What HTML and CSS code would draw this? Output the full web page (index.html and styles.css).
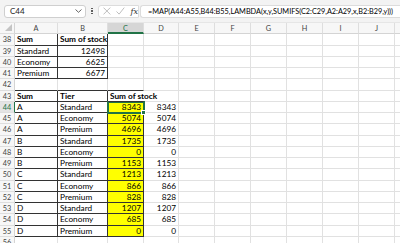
FILE: index.html
```html
<!doctype html>
<html>
    <head>
        <meta charset="UTF-8">
        <title>Book1 - Excel</title>
        <link rel="stylesheet" href="styles.css">
    </head>
    <body>
        <!--Formula bar-->
        <div class="bar">
            <div class="namebox">
                <span>C44</span>
                <svg class="caret" width="7" height="4" viewBox="0 0 7 4"><path d="M0.5 0.5 L3.5 3.3 L6.5 0.5" fill="none" stroke="#555" stroke-width="0.9"/></svg>
            </div>
            <div class="dots"><i></i><i></i><i></i></div>
            <div class="fxbox">
                <svg width="8" height="8" viewBox="0 0 8 8"><path d="M0.5 0.5 L7.5 7.5 M7.5 0.5 L0.5 7.5" stroke="#b4b4b4" stroke-width="0.9"/></svg>
                <svg width="9" height="8" viewBox="0 0 9 8"><path d="M0.5 4.5 L3.2 7.2 L8.5 0.5" fill="none" stroke="#b4b4b4" stroke-width="0.9"/></svg>
                <span class="fx">fx</span>
            </div>
            <div class="formula">=MAP(A44:A55,B44:B55,LAMBDA(x,y,SUMIFS(C2:C29,A2:A29,x,B2:B29,y)))</div>
        </div>

        <!--Sheet-->
        <div class="sheet">
            <div class="row head">
                <div class="rh corner"><svg width="7" height="7" viewBox="0 0 7 7"><path d="M7 0 L7 7 L0 7 Z" fill="#c4c4c4"/></svg></div>
                <div class="h a">A</div>
                <div class="h b">B</div>
                <div class="h cc on">C</div>
                <div class="h d">D</div>
                <div class="h e">E</div>
                <div class="h e">F</div>
                <div class="h e">G</div>
                <div class="h e">H</div>
                <div class="h e">I</div>
                <div class="h e">J</div>
                <div class="h e"></div>
            </div>

            <div class="row"><div class="rh">38</div><div class="c a k bold">Sum</div><div class="c b k bold">Sum of stock</div><div class="c cc"></div><div class="c d"></div><div class="rest"></div></div>
            <div class="row"><div class="rh">39</div><div class="c a k">Standard</div><div class="c b k num">12498</div><div class="c cc"></div><div class="c d"></div><div class="rest"></div></div>
            <div class="row"><div class="rh">40</div><div class="c a k">Economy</div><div class="c b k num">6625</div><div class="c cc"></div><div class="c d"></div><div class="rest"></div></div>
            <div class="row"><div class="rh">41</div><div class="c a k">Premium</div><div class="c b k num">6677</div><div class="c cc"></div><div class="c d"></div><div class="rest"></div></div>
            <div class="row"><div class="rh">42</div><div class="c a kb"></div><div class="c b kb"></div><div class="c cc kb"></div><div class="c d"></div><div class="rest"></div></div>
            <div class="row"><div class="rh">43</div><div class="c a k bold">Sum</div><div class="c b k bold">Tier</div><div class="c cc kb open bold">Sum of stock</div><div class="c d"></div><div class="rest"></div></div>

            <div class="row"><div class="rh act">44</div><div class="c a k">A</div><div class="c b k">Standard</div><div class="c cc k y num sel">8343</div><div class="c d num">8343</div><div class="rest"></div></div>
            <div class="row"><div class="rh">45</div><div class="c a k">A</div><div class="c b k">Economy</div><div class="c cc k y num">5074</div><div class="c d num">5074</div><div class="rest"></div></div>
            <div class="row"><div class="rh">46</div><div class="c a k">A</div><div class="c b k">Premium</div><div class="c cc k y num">4696</div><div class="c d num">4696</div><div class="rest"></div></div>
            <div class="row"><div class="rh">47</div><div class="c a k">B</div><div class="c b k">Standard</div><div class="c cc k y num">1735</div><div class="c d num">1735</div><div class="rest"></div></div>
            <div class="row"><div class="rh">48</div><div class="c a k">B</div><div class="c b k">Economy</div><div class="c cc k y num">0</div><div class="c d num">0</div><div class="rest"></div></div>
            <div class="row"><div class="rh">49</div><div class="c a k">B</div><div class="c b k">Premium</div><div class="c cc k y num">1153</div><div class="c d num">1153</div><div class="rest"></div></div>
            <div class="row"><div class="rh">50</div><div class="c a k">C</div><div class="c b k">Standard</div><div class="c cc k y num">1213</div><div class="c d num">1213</div><div class="rest"></div></div>
            <div class="row"><div class="rh">51</div><div class="c a k">C</div><div class="c b k">Economy</div><div class="c cc k y num">866</div><div class="c d num">866</div><div class="rest"></div></div>
            <div class="row"><div class="rh">52</div><div class="c a k">C</div><div class="c b k">Premium</div><div class="c cc k y num">828</div><div class="c d num">828</div><div class="rest"></div></div>
            <div class="row"><div class="rh">53</div><div class="c a k">D</div><div class="c b k">Standard</div><div class="c cc k y num">1207</div><div class="c d num">1207</div><div class="rest"></div></div>
            <div class="row"><div class="rh">54</div><div class="c a k">D</div><div class="c b k">Economy</div><div class="c cc k y num">685</div><div class="c d num">685</div><div class="rest"></div></div>
            <div class="row"><div class="rh">55</div><div class="c a k">D</div><div class="c b k">Premium</div><div class="c cc k y num">0</div><div class="c d num">0</div><div class="rest"></div></div>
            <div class="row"><div class="rh">56</div><div class="c a"></div><div class="c b"></div><div class="c cc"></div><div class="c d"></div><div class="rest"></div></div>
        </div>
    </body>
</html>
```

FILE: styles.css
```css
body{
    margin: 0;
    width: 400px;
    height: 243px;
    overflow: hidden;
    background: white;
    font-family: Lato, "Liberation Sans", sans-serif;
    color: black;
}

/* Formula bar */
.bar{
    box-sizing: border-box;
    height: 23px;
    display: flex;
    align-items: center;
    padding-left: 4px;
    background: #f3f3f3;
    border-bottom: 1px solid #e6e6e6;
    white-space: nowrap;
}

.namebox{
    box-sizing: border-box;
    width: 82px;
    height: 13px;
    display: flex;
    align-items: center;
    justify-content: space-between;
    padding: 0 3px 0 5px;
    background: white;
    border: 1px solid #cfcfcf;
    border-radius: 3px;
    font-size: 8px;
    color: #222;
}

.dots{
    width: 12px;
    display: flex;
    flex-direction: column;
    align-items: center;
    gap: 1px;
}
.dots i{
    width: 1.5px;
    height: 1.5px;
    border-radius: 50%;
    background: #444;
}

.fxbox{
    box-sizing: border-box;
    width: 41px;
    height: 13px;
    display: flex;
    align-items: center;
    gap: 5px;
    padding-left: 4px;
    background: white;
    border: 1px solid #dcdcdc;
    border-radius: 3px 0 0 3px;
}
.fx{
    font-family: "DejaVu Serif", serif;
    font-style: italic;
    font-size: 8px;
    color: #333;
    margin-left: 1px;
}

.formula{
    box-sizing: border-box;
    flex: 1;
    height: 13px;
    margin-left: 1px;
    padding-left: 7px;
    background: white;
    border: 1px solid #dcdcdc;
    border-right: none;
    border-radius: 3px 0 0 3px;
    font-size: 7.3px;
    line-height: 11px;
    overflow: hidden;
}

/* Sheet */
.row{
    display: flex;
    height: 11.25px;
}

.rh{
    box-sizing: border-box;
    flex: none;
    width: 15px;
    background: #f7f7f7;
    border-right: 1px solid #d4d4d4;
    border-bottom: 1px solid #dedede;
    text-align: center;
    font-size: 7.3px;
    line-height: 11px;
    color: #444;
}
.rh.act{
    color: #217346;
    background: #e4e4e4;
    border-right: 1px solid #217346;
}
.corner{
    display: flex;
    align-items: flex-end;
    justify-content: flex-end;
    padding: 0 2px 2px 0;
}

.head .h{
    box-sizing: border-box;
    flex: none;
    background: #f7f7f7;
    border-right: 1px solid #dedede;
    border-bottom: 1px solid #d4d4d4;
    text-align: center;
    font-size: 7.3px;
    line-height: 11px;
    color: #444;
}
.head .h.on{
    background: #d6d6d6;
    color: #217346;
    border-bottom: 2px solid #217346;
}

.c{
    box-sizing: border-box;
    flex: none;
    padding: 0 2px;
    border-right: 1px solid #e1e1e1;
    border-bottom: 1px solid #e1e1e1;
    font-size: 8.25px;
    line-height: 11px;
    white-space: nowrap;
}

.a{ width: 43px; }
.b{ width: 50px; }
.cc{ width: 36px; }
.d{ width: 35px; }
.e{ width: 36px; }

.rest{
    flex: 1;
    border-bottom: 1px solid #e1e1e1;
    background: repeating-linear-gradient(to right, transparent 0 35px, #e1e1e1 35px 36px);
}

.k{
    border-right-color: #333;
    border-bottom-color: #333;
}
.kb{
    border-bottom-color: #333;
}
.open{
    position: relative;
    z-index: 1;
    border-right-color: transparent;
    overflow: visible;
}
.num{ text-align: right; }
.bold{ font-weight: bold; }
.y{ background: #ffff00; }

.sel{
    position: relative;
    outline: 2px solid #217346;
    outline-offset: -1px;
}
.sel::after{
    content: "";
    position: absolute;
    right: -3px;
    bottom: -3px;
    width: 3px;
    height: 3px;
    background: #217346;
    border: 1px solid white;
}
```
